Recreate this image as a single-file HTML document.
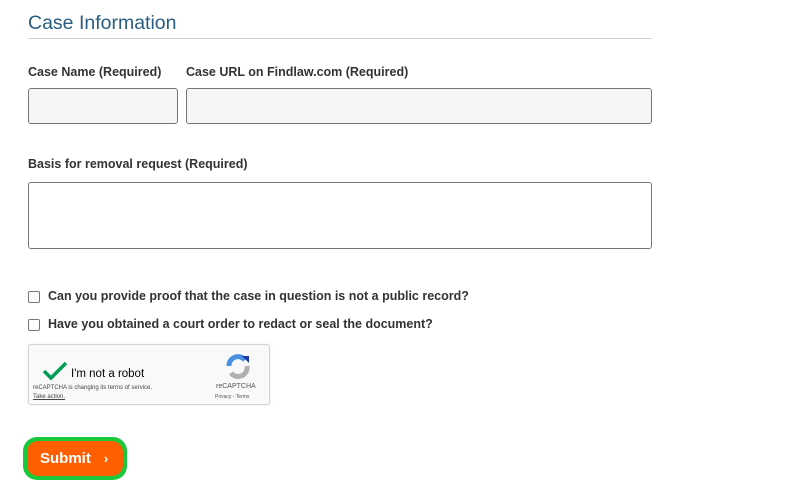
<!DOCTYPE html>
<html><head><style>
body{margin:0;width:792px;height:499px;background:#fff;font-family:"Liberation Sans",sans-serif;position:relative;overflow:hidden}
.a{position:absolute}
.lbl{font-weight:bold;font-size:12.5px;color:#333}
.in{background:#f5f5f5;border:1px solid #767676;border-radius:3px;box-sizing:border-box}
.cb{width:12px;height:12px;border:1px solid #767676;border-radius:2px;box-sizing:border-box;background:#fff}
</style></head><body>
<div class="a" style="left:28px;top:12px;font-size:19.5px;color:#2a5d82">Case Information</div>
<div class="a" style="left:28px;top:38px;width:624px;height:1px;background:#d0d0d0"></div>
<div class="a lbl" style="left:28px;top:65px">Case Name (Required)</div>
<div class="a lbl" style="left:186px;top:65px">Case URL on Findlaw.com (Required)</div>
<div class="a in" style="left:28px;top:88px;width:150px;height:36px"></div>
<div class="a in" style="left:186px;top:88px;width:466px;height:36px"></div>
<div class="a lbl" style="left:28px;top:157px">Basis for removal request (Required)</div>
<div class="a" style="left:28px;top:182px;width:624px;height:67px;border:1px solid #767676;border-radius:3px;box-sizing:border-box;background:#fff"></div>
<div class="a cb" style="left:28px;top:291px"></div>
<div class="a lbl" style="left:48px;top:289px">Can you provide proof that the case in question is not a public record?</div>
<div class="a cb" style="left:28px;top:319px"></div>
<div class="a lbl" style="left:48px;top:317px">Have you obtained a court order to redact or seal the document?</div>
<div class="a" style="left:28px;top:344px;width:242px;height:61px;background:#f9f9f9;border:1px solid #d3d3d3;border-radius:3px;box-sizing:border-box;box-shadow:0 0 3px rgba(0,0,0,.08)">
<svg class="a" style="left:13px;top:16px" width="26" height="20" viewBox="0 0 26 20"><path d="M2 10 L9 17 L24 2" stroke="#009e55" stroke-width="3.5" fill="none"/></svg>
<div class="a" style="left:42px;top:23px;font-size:11.5px;color:#000">I'm not a robot</div>
<div class="a" style="left:4px;top:40px;font-size:6px;color:#444">reCAPTCHA is changing its terms of service.</div>
<div class="a" style="left:4px;top:49px;font-size:6px;color:#444;text-decoration:underline">Take action.</div>
<svg class="a" style="left:196px;top:8px" width="26" height="26" viewBox="0 0 26 26"><path d="M4 13 A9 9 0 0 1 20 7" stroke="#4a90e2" stroke-width="5" fill="none"/><path d="M17 3 L24 3 L24 10 Z" fill="#1c3aa9"/><path d="M22 13 A9 9 0 0 1 6 20" stroke="#b0b0b0" stroke-width="5" fill="none"/></svg>
<div class="a" style="left:187px;top:38px;font-size:7px;color:#555">reCAPTCHA</div>
<div class="a" style="left:186px;top:49px;font-size:5px;color:#555">Privacy - Terms</div>
</div>
<div class="a" style="left:23px;top:437px;width:104px;height:43px;background:#17c93b;border-radius:14px"></div>
<div class="a" style="left:27px;top:441px;width:96px;height:35px;background:#ff5f00;border-radius:11px;color:#fff;font-weight:bold;font-size:15px;line-height:35px;box-sizing:border-box;padding-left:13px">Submit<span style="font-size:13px;margin-left:13px">›</span></div>
</body></html>
